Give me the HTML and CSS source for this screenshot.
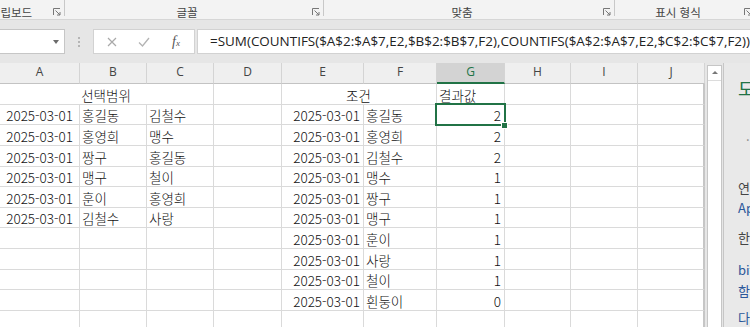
FILE: index.html
```html
<!DOCTYPE html>
<html lang="ko">
<head>
  <meta charset="UTF-8" />
  <meta name="viewport" content="width=device-width, initial-scale=1.0"/>
  <title>COUNTIFS</title>
  <link rel="stylesheet" href="styles.css">
</head>
<body>
  <!-- 리본 그룹 이름 줄 -->
  <div class="ribbon">
    <div class="group g-clip">
      <span class="group-label">클립보드</span>
      <span class="launcher"><svg width="8" height="8" viewBox="0 0 8 8"><path d="M0.5 7V0.5H7" fill="none" stroke="#777"/><path d="M2.5 2.5L7 7M7 4V7H4" fill="none" stroke="#777"/></svg></span>
      <i class="sep"></i>
    </div>
    <div class="group g-font">
      <span class="group-label">글꼴</span>
      <span class="launcher"><svg width="8" height="8" viewBox="0 0 8 8"><path d="M0.5 7V0.5H7" fill="none" stroke="#777"/><path d="M2.5 2.5L7 7M7 4V7H4" fill="none" stroke="#777"/></svg></span>
      <i class="sep"></i>
    </div>
    <div class="group g-align">
      <span class="group-label">맞춤</span>
      <span class="launcher"><svg width="8" height="8" viewBox="0 0 8 8"><path d="M0.5 7V0.5H7" fill="none" stroke="#777"/><path d="M2.5 2.5L7 7M7 4V7H4" fill="none" stroke="#777"/></svg></span>
      <i class="sep"></i>
    </div>
    <div class="group g-number">
      <span class="group-label">표시 형식</span>
      <span class="launcher"><svg width="8" height="8" viewBox="0 0 8 8"><path d="M0.5 7V0.5H7" fill="none" stroke="#777"/><path d="M2.5 2.5L7 7M7 4V7H4" fill="none" stroke="#777"/></svg></span>
    </div>
  </div>

  <!-- 수식 입력줄 -->
  <div class="formula-bar">
    <div class="name-box"><span class="drop"></span></div>
    <div class="grip"><i></i><i></i><i></i></div>
    <div class="fx-buttons">
      <svg class="btn-cancel" width="10" height="10" viewBox="0 0 10 10"><path d="M1 1L9 9M9 1L1 9" stroke="#a9a9a9" stroke-width="1.2"/></svg>
      <svg class="btn-enter" width="12" height="10" viewBox="0 0 12 10"><path d="M1 5.5L4.5 9L11 1" fill="none" stroke="#b3b3b3" stroke-width="1.3"/></svg>
      <span class="fx">f<small>x</small></span>
    </div>
    <div class="formula">=SUM(COUNTIFS($A$2:$A$7,E2,$B$2:$B$7,F2),COUNTIFS($A$2:$A$7,E2,$C$2:$C$7,F2))</div>
  </div>

  <div class="workspace">
    <div class="sheet">
      <div class="row col-head">
        <div class="h">A</div><div class="h">B</div><div class="h">C</div><div class="h">D</div><div class="h">E</div>
        <div class="h">F</div><div class="h active">G</div><div class="h">H</div><div class="h">I</div><div class="h">J</div>
      </div>

      <div class="row">
        <div class="c mid span3">선택범위</div><div class="c"></div>
        <div class="c mid span2">조건</div><div class="c">결과값</div>
        <div class="c"></div><div class="c"></div><div class="c"></div>
      </div>
      <div class="row short">
        <div class="c num pad">2025-03-01</div><div class="c">홍길동</div><div class="c">김철수</div><div class="c"></div>
        <div class="c num">2025-03-01</div><div class="c">홍길동</div><div class="c num">2</div>
        <div class="c"></div><div class="c"></div><div class="c"></div>
      </div>
      <div class="row">
        <div class="c num pad">2025-03-01</div><div class="c">홍영희</div><div class="c">맹수</div><div class="c"></div>
        <div class="c num">2025-03-01</div><div class="c">홍영희</div><div class="c num">2</div>
        <div class="c"></div><div class="c"></div><div class="c"></div>
      </div>
      <div class="row">
        <div class="c num pad">2025-03-01</div><div class="c">짱구</div><div class="c">홍길동</div><div class="c"></div>
        <div class="c num">2025-03-01</div><div class="c">김철수</div><div class="c num">2</div>
        <div class="c"></div><div class="c"></div><div class="c"></div>
      </div>
      <div class="row short">
        <div class="c num pad">2025-03-01</div><div class="c">맹구</div><div class="c">철이</div><div class="c"></div>
        <div class="c num">2025-03-01</div><div class="c">맹수</div><div class="c num">1</div>
        <div class="c"></div><div class="c"></div><div class="c"></div>
      </div>
      <div class="row">
        <div class="c num pad">2025-03-01</div><div class="c">훈이</div><div class="c">홍영희</div><div class="c"></div>
        <div class="c num">2025-03-01</div><div class="c">짱구</div><div class="c num">1</div>
        <div class="c"></div><div class="c"></div><div class="c"></div>
      </div>
      <div class="row short">
        <div class="c num pad">2025-03-01</div><div class="c">김철수</div><div class="c">사랑</div><div class="c"></div>
        <div class="c num">2025-03-01</div><div class="c">맹구</div><div class="c num">1</div>
        <div class="c"></div><div class="c"></div><div class="c"></div>
      </div>
      <div class="row">
        <div class="c"></div><div class="c"></div><div class="c"></div><div class="c"></div>
        <div class="c num">2025-03-01</div><div class="c">훈이</div><div class="c num">1</div>
        <div class="c"></div><div class="c"></div><div class="c"></div>
      </div>
      <div class="row">
        <div class="c"></div><div class="c"></div><div class="c"></div><div class="c"></div>
        <div class="c num">2025-03-01</div><div class="c">사랑</div><div class="c num">1</div>
        <div class="c"></div><div class="c"></div><div class="c"></div>
      </div>
      <div class="row short">
        <div class="c"></div><div class="c"></div><div class="c"></div><div class="c"></div>
        <div class="c num">2025-03-01</div><div class="c">철이</div><div class="c num">1</div>
        <div class="c"></div><div class="c"></div><div class="c"></div>
      </div>
      <div class="row">
        <div class="c"></div><div class="c"></div><div class="c"></div><div class="c"></div>
        <div class="c num">2025-03-01</div><div class="c">흰둥이</div><div class="c num">0</div>
        <div class="c"></div><div class="c"></div><div class="c"></div>
      </div>
      <div class="row">
        <div class="c"></div><div class="c"></div><div class="c"></div><div class="c"></div><div class="c"></div>
        <div class="c"></div><div class="c"></div><div class="c"></div><div class="c"></div><div class="c"></div>
      </div>

      <!-- 선택된 셀 G2 -->
      <div class="selection"><span class="handle"></span></div>
    </div>

    <div class="vscroll">
      <div class="scroll-up"><span class="arrow-up"></span></div>
    </div>

    <!-- 오른쪽 작업창 (잘려 보임) -->
    <div class="pane">
      <div class="pane-line title">도움말</div>
      <div class="pane-line dot">·</div>
      <div class="pane-line l3">연관 항목</div>
      <div class="pane-line link l4">Applies To</div>
      <div class="pane-line l5">한 번에</div>
      <div class="pane-line link l6">bit</div>
      <div class="pane-line link l7">함수</div>
      <div class="pane-line link l8">다음</div>
    </div>
  </div>
</body>
</html>
```

FILE: styles.css
```css
* {
  box-sizing: border-box;
}

body {
  margin: 0;
  width: 750px;
  height: 327px;
  overflow: hidden;
  background-color: #e6e6e6;
  font-family: "Noto Sans CJK KR", "Noto Sans", sans-serif;
  color: #000;
}

/* ---------- 리본 ---------- */
.ribbon {
  display: flex;
  height: 20px;
  background-color: #f3f3f3;
  border-bottom: 1px solid #d6d6d6;
  overflow: hidden;
}

.group {
  display: flex;
  align-items: flex-start;
  flex-shrink: 0;
}

.g-clip   { width: 93px; margin-left: -28px; }
.g-font   { width: 259px; }
.g-align  { width: 291px; }
.g-number { width: 140px; }

.group-label {
  flex: 1;
  text-align: center;
  font-size: 11.5px;
  line-height: 12px;
  padding-top: 6px;
  color: #444;
  white-space: nowrap;
}

.launcher {
  width: 14px;
  display: flex;
  justify-content: center;
  padding-top: 8px;
}

.sep {
  width: 1px;
  height: 16px;
  background-color: #c8c8c8;
}

/* ---------- 수식 입력줄 ---------- */
.formula-bar {
  display: flex;
  align-items: flex-start;
  height: 43px;
  padding-top: 9px;
}

.name-box {
  width: 75px;
  height: 25px;
  margin-left: -10px;
  background-color: #fff;
  border: 1px solid #c6c6c6;
  display: flex;
  align-items: center;
  justify-content: flex-end;
  padding-right: 5px;
}

.drop {
  width: 0;
  height: 0;
  border-left: 3.5px solid transparent;
  border-right: 3.5px solid transparent;
  border-top: 4px solid #6b6b6b;
}

.grip {
  width: 28px;
  height: 25px;
  display: flex;
  flex-direction: column;
  align-items: center;
  justify-content: center;
  gap: 2px;
}

.grip i {
  width: 2px;
  height: 2px;
  background-color: #b5b5b5;
}

.fx-buttons {
  width: 102px;
  height: 25px;
  background-color: #fff;
  border: 1px solid #d2d2d2;
  display: flex;
  align-items: center;
  padding-left: 13px;
}

.btn-enter {
  margin-left: 21px;
}

.fx {
  margin-left: 22px;
  font-family: "Liberation Serif", serif;
  font-style: italic;
  font-size: 14px;
  color: #555;
  line-height: 1;
}

.fx small {
  font-size: 9px;
}

.formula {
  flex: 1;
  height: 25px;
  margin-left: 2px;
  margin-right: -30px;
  background-color: #fff;
  border: 1px solid #d2d2d2;
  padding-left: 12px;
  font-family: "Open Sans", "Noto Sans", sans-serif;
  font-size: 13.45px;
  line-height: 23px;
  color: #222;
  white-space: nowrap;
  overflow: hidden;
}

/* ---------- 시트 ---------- */
.workspace {
  display: flex;
  height: 264px;
  overflow: hidden;
}

.sheet {
  position: relative;
  width: 705px;
  flex-shrink: 0;
  background-color: #fff;
}

.row {
  display: grid;
  grid-template-columns: 80px 67px 67px 68px 82px 73px 68px 66px 67px 67px;
  height: 21px;
}

.row.short {
  height: 20px;
}

.col-head .h {
  background-color: #efefef;
  border-right: 1px solid #d4d4d4;
  border-bottom: 1px solid #c3c3c3;
  text-align: center;
  font-family: "Open Sans", "Noto Sans", sans-serif;
  font-size: 12px;
  line-height: 18px;
  color: #444;
}

.col-head .h.active {
  background-color: #d3d3d3;
  color: #217346;
  border-bottom: 2px solid #217346;
}

.c {
  display: flex;
  align-items: flex-end;
  padding: 0 3px 1px 2px;
  font-size: 13.5px;
  font-weight: 300;
  line-height: 16px;
  color: #111;
  white-space: nowrap;
  overflow: hidden;
  border-right: 1px solid #dadada;
  border-bottom: 1px solid #dadada;
}

.c:last-child {
  border-right: 2px solid #c6c6c6;
}

.c.num {
  justify-content: flex-end;
}

.c.pad {
  padding-right: 6px;
}

.c.mid {
  justify-content: center;
}

.span3 {
  grid-column: span 3;
}

.span2 {
  grid-column: span 2;
}

/* 선택 테두리 */
.selection {
  position: absolute;
  left: 435px;
  top: 40px;
  width: 71px;
  height: 23px;
  border: 2px solid #217346;
}

.handle {
  position: absolute;
  right: -4px;
  bottom: -5px;
  width: 7px;
  height: 7px;
  background-color: #217346;
  border: 1px solid #fff;
}

/* ---------- 세로 스크롤바 ---------- */
.vscroll {
  width: 15px;
  margin-left: 2px;
  margin-top: 2px;
  background-color: #fff;
  border: 1px solid #c6c6c6;
  border-bottom: none;
  flex-shrink: 0;
}

.scroll-up {
  height: 15px;
  border-bottom: 1px solid #dcdcdc;
  display: flex;
  justify-content: center;
  padding-top: 5px;
}

.arrow-up {
  width: 0;
  height: 0;
  border-left: 3px solid transparent;
  border-right: 3px solid transparent;
  border-bottom: 3px solid #777;
}

/* ---------- 작업창 ---------- */
.pane {
  flex: 1;
  margin-left: 1px;
  border-left: 1px solid #c6c6c6;
  background-color: #e9e9e9;
  padding-left: 14px;
  display: flex;
  flex-direction: column;
  overflow: hidden;
  white-space: nowrap;
  font-size: 13px;
  color: #444;
}

.pane-line {
  height: 20px;
  line-height: 20px;
  flex-shrink: 0;
}

.pane-line.title {
  margin-top: 15px;
  font-size: 18px;
  color: #217346;
}

.pane-line.dot {
  margin-top: 32px;
  padding-left: 8px;
  color: #888;
}

.pane-line.l3 { margin-top: 28px; }
.pane-line.l5 { margin-top: 10px; }
.pane-line.l6 { margin-top: 12px; }
.pane-line.l7 { margin-top: 1px; }
.pane-line.l8 { margin-top: 7px; }

.pane-line.link {
  color: #2b579a;
}
```
